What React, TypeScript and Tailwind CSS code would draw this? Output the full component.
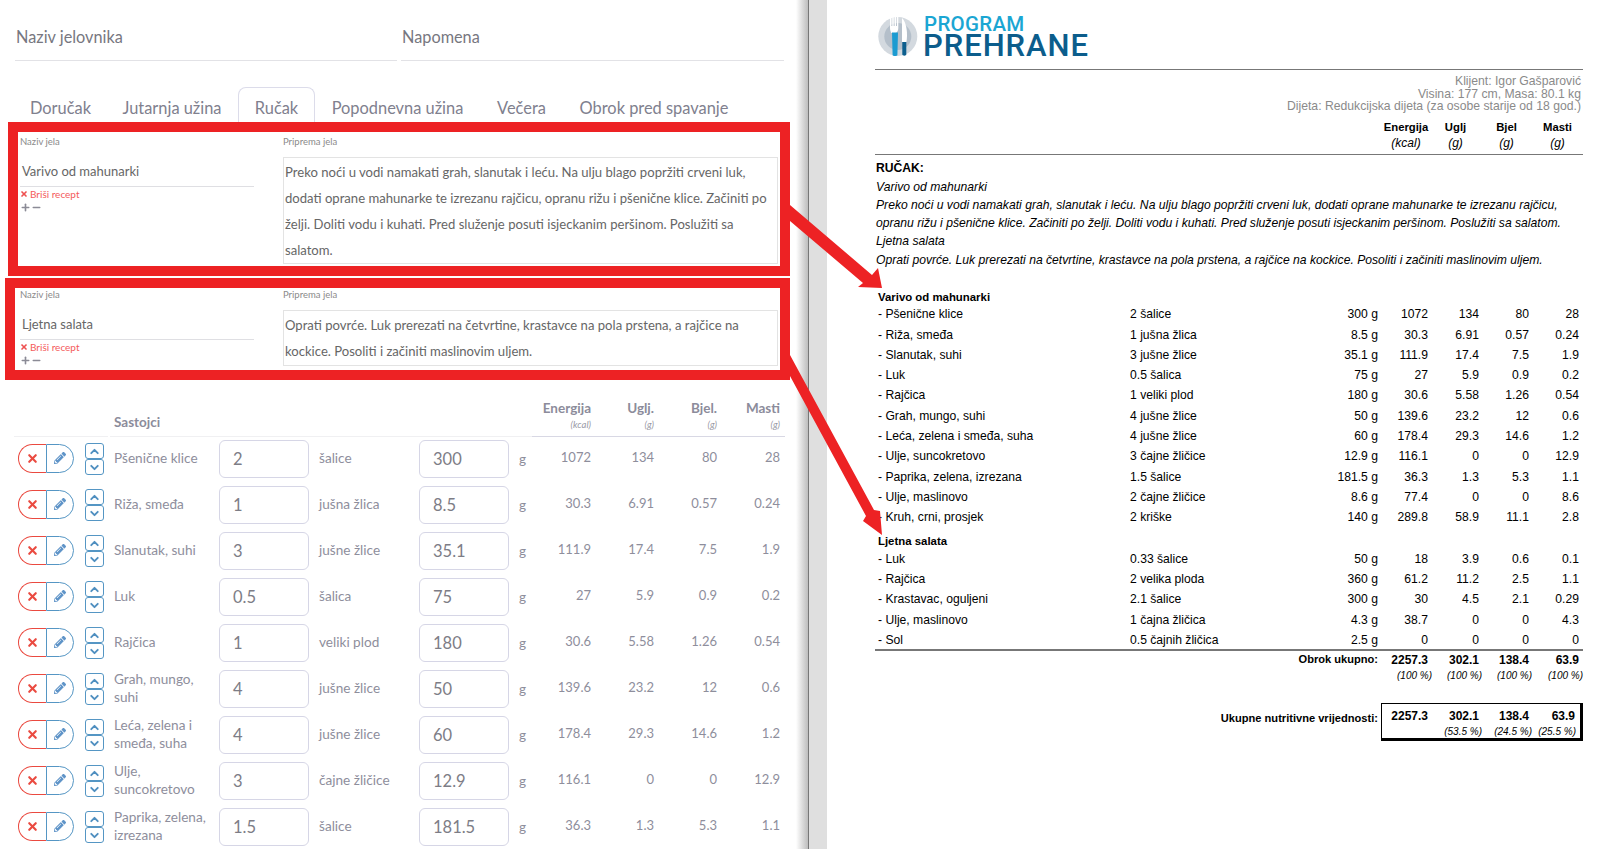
import React from "react";
import { X, Plus, Minus, ChevronUp, ChevronDown } from "lucide-react";
import { FaPencilAlt } from "react-icons/fa";

const tabs = [
  { t: "Doručak", w: "w-[91px]" },
  { t: "Jutarnja užina", w: "w-[132px]" },
  { t: "Ručak", w: "w-[77px]", active: true },
  { t: "Popodnevna užina", w: "w-[165px]" },
  { t: "Večera", w: "w-[83px]" },
  { t: "Obrok pred spavanje", w: "w-[182px]" },
];

const rows = [
  ["Pšenične klice", "2", "šalice", "300", "1072", "134", "80", "28"],
  ["Riža, smeđa", "1", "jušna žlica", "8.5", "30.3", "6.91", "0.57", "0.24"],
  ["Slanutak, suhi", "3", "jušne žlice", "35.1", "111.9", "17.4", "7.5", "1.9"],
  ["Luk", "0.5", "šalica", "75", "27", "5.9", "0.9", "0.2"],
  ["Rajčica", "1", "veliki plod", "180", "30.6", "5.58", "1.26", "0.54"],
  ["Grah, mungo,\nsuhi", "4", "jušne žlice", "50", "139.6", "23.2", "12", "0.6"],
  ["Leća, zelena i\nsmeđa, suha", "4", "jušne žlice", "60", "178.4", "29.3", "14.6", "1.2"],
  ["Ulje,\nsuncokretovo", "3", "čajne žličice", "12.9", "116.1", "0", "0", "12.9"],
  ["Paprika, zelena,\nizrezana", "1.5", "šalice", "181.5", "36.3", "1.3", "5.3", "1.1"],
];

const r1 = [
  ["h-[20px] pb-px", "Pšenične klice", "2 šalice", "300 g", "1072", "134", "80", "28"],
  ["h-[21px] pt-px", "Riža, smeđa", "1 jušna žlica", "8.5 g", "30.3", "6.91", "0.57", "0.24"],
  ["h-[20px]", "Slanutak, suhi", "3 jušne žlice", "35.1 g", "111.9", "17.4", "7.5", "1.9"],
  ["h-[20px]", "Luk", "0.5 šalica", "75 g", "27", "5.9", "0.9", "0.2"],
  ["h-[20px]", "Rajčica", "1 veliki plod", "180 g", "30.6", "5.58", "1.26", "0.54"],
  ["h-[21px] pt-px", "Grah, mungo, suhi", "4 jušne žlice", "50 g", "139.6", "23.2", "12", "0.6"],
  ["h-[20px]", "Leća, zelena i smeđa, suha", "4 jušne žlice", "60 g", "178.4", "29.3", "14.6", "1.2"],
  ["h-[20px]", "Ulje, suncokretovo", "3 čajne žličice", "12.9 g", "116.1", "0", "0", "12.9"],
  ["h-[21px] pt-px", "Paprika, zelena, izrezana", "1.5 šalice", "181.5 g", "36.3", "1.3", "5.3", "1.1"],
  ["h-[20px]", "Ulje, maslinovo", "2 čajne žličice", "8.6 g", "77.4", "0", "0", "8.6"],
  ["h-[20px]", "Kruh, crni, prosjek", "2 kriške", "140 g", "289.8", "58.9", "11.1", "2.8"],
];

const r2 = [
  ["h-[20px]", "Luk", "0.33 šalice", "50 g", "18", "3.9", "0.6", "0.1"],
  ["h-[20px]", "Rajčica", "2 velika ploda", "360 g", "61.2", "11.2", "2.5", "1.1"],
  ["h-[20px]", "Krastavac, oguljeni", "2.1 šalice", "300 g", "30", "4.5", "2.1", "0.29"],
  ["h-[21px] pt-px", "Ulje, maslinovo", "1 čajna žličica", "4.3 g", "38.7", "0", "0", "4.3"],
  ["h-[18px] pt-[2px]", "Sol", "0.5 čajnih žličica", "2.5 g", "0", "0", "0", "0"],
];

function Recipe({ name, lines, areaH, boxCls, leftPad, shift }: { name: string; lines: string[]; areaH: string; boxCls: string; leftPad: string; shift: string }) {
  return (
    <div className={`border-[10px] border-[#ed2224] bg-white ${boxCls}`}>
      <div className={`flex ${leftPad} ${shift}`}>
        <div className="w-[234px] shrink-0">
          <div className="h-[20px] text-[9.5px] leading-[20px] text-[#8a8a8a]">Naziv jela</div>
          <div className="h-[35px] border-b border-[#dfdfe3] pt-[9px] pl-[2px] text-[13px] leading-[20px] text-[#666]">{name}</div>
          <div className="flex h-[14px] items-center text-[10px] leading-[14px] text-[#f45b5b]">
            <X size={8} strokeWidth={5} className="mr-[2px] text-[#ee5050]" />
            Briši recept
          </div>
          <div className="flex h-[13px] items-center text-[#8b8b96]">
            <Plus size={11} strokeWidth={3.5} />
            <Minus size={11} strokeWidth={3.5} />
          </div>
        </div>
        <div className="ml-[29px] w-[495px] shrink-0">
          <div className="h-[20px] text-[9.5px] leading-[20px] text-[#8a8a8a]">Priprema jela</div>
          <div className={`mt-[5px] border border-[#e3e3e3] pl-px pt-px text-[13.1px] leading-[26px] text-[#666] ${areaH}`}>
            {lines.map((l) => (
              <div key={l} className="whitespace-nowrap">{l}</div>
            ))}
          </div>
        </div>
      </div>
    </div>
  );
}

function Head({ a, b, w }: { a: string; b: string; w: string }) {
  return (
    <div className={`text-right ${w}`}>
      <div className="text-[13.5px] font-bold leading-[18px] text-[#8c8c9b]">{a}</div>
      <div className="mt-[2px] text-[9.5px] italic leading-[12px] text-[#9a9aa6]">{b}</div>
    </div>
  );
}

function IngredientRow({ r }: { r: string[] }) {
  return (
    <div className="flex h-[46px] items-center pl-[18px] text-[13.6px] text-[#8e8e9c]">
      <div className="mb-[2px] flex h-[29px] w-[56px] shrink-0">
        <div className="flex w-[28px] items-center justify-center rounded-l-full border border-r-0 border-[#ea4a40]">
          <X size={13} strokeWidth={4} className="text-[#ea4a40]" />
        </div>
        <div className="flex w-[28px] items-center justify-center rounded-r-full border border-[#5596c4]">
          <FaPencilAlt size={12} className="text-[#5f94c8]" />
        </div>
      </div>
      <div className="ml-[11px] flex w-[19px] shrink-0 flex-col">
        <div className="flex h-[16px] items-center justify-center rounded-[3px] border border-[#5596c4]">
          <ChevronUp size={13} strokeWidth={3.5} className="text-[#4f8fc0]" />
        </div>
        <div className="flex h-[16px] items-center justify-center rounded-[3px] border border-[#5596c4]">
          <ChevronDown size={13} strokeWidth={3.5} className="text-[#4f8fc0]" />
        </div>
      </div>
      <div className="mb-[2px] ml-[10px] w-[105px] shrink-0 whitespace-pre-line leading-[18px]">{r[0]}</div>
      <div className="flex h-[38px] w-[90px] shrink-0 items-center rounded-[6px] border border-[#d6d6e6] pl-[13px] text-[16.5px] text-[#7d7d86]">{r[1]}</div>
      <div className="mb-[2px] ml-[10px] w-[100px] shrink-0 whitespace-nowrap">{r[2]}</div>
      <div className="flex h-[38px] w-[90px] shrink-0 items-center rounded-[6px] border border-[#d6d6e6] pl-[13px] text-[16.5px] text-[#7d7d86]">{r[3]}</div>
      <div className="w-[32px] shrink-0 pl-[10px]">g</div>
      <div className="mb-[2px] w-[50px] shrink-0 text-right text-[13px]">{r[4]}</div>
      <div className="mb-[2px] w-[63px] shrink-0 text-right text-[13px]">{r[5]}</div>
      <div className="mb-[2px] w-[63px] shrink-0 text-right text-[13px]">{r[6]}</div>
      <div className="mb-[2px] w-[63px] shrink-0 text-right text-[13px]">{r[7]}</div>
    </div>
  );
}

function PlanRow({ r }: { r: string[] }) {
  return (
    <div className={`flex items-center text-[12.15px] text-black ${r[0]}`}>
      <div className="w-[255px] shrink-0 pl-[3px]">- {r[1]}</div>
      <div className="w-[170px] shrink-0">{r[2]}</div>
      <div className="w-[78px] shrink-0 text-right">{r[3]}</div>
      <div className="w-[50px] shrink-0 text-right">{r[4]}</div>
      <div className="w-[51px] shrink-0 text-right">{r[5]}</div>
      <div className="w-[50px] shrink-0 text-right">{r[6]}</div>
      <div className="w-[50px] shrink-0 text-right">{r[7]}</div>
    </div>
  );
}

function Logo() {
  return (
    <svg width="40" height="41" viewBox="0 0 40 41" className="shrink-0">
      <circle cx="19.8" cy="20.5" r="19.5" fill="#d3d9df" />
      <circle cx="19.8" cy="20.5" r="13.5" fill="#b4bfca" />
      <path d="M12 1h1.4v9h.9V1h1.4v9h.9V1h1.4v9h.9V1h1.4v11c0 2.5-1 4-2.5 5h-4.5C13 16 12 14.5 12 12z" fill="#fff" />
      <path d="M14 16.500h6l-.6 22.500c0 1.400-4.800 1.400-4.800 0z" fill="#1c9bd1" />
      <path d="M24 2c3 3 5 9 5 17 0 3-.3 5-.6 7H24z" fill="#fff" />
      <path d="M24.300 26h4v12.500c0 1.500-4 1.500-4 0z" fill="#0d5f8e" />
    </svg>
  );
}

export default function App() {
  return (
    <div className="relative flex h-[849px] w-[1620px] overflow-hidden bg-white">
      {/* left editor */}
      <div className="w-[796px] shrink-0 font-['Lato',sans-serif]">
        <div className="flex h-[61px]">
          <div className="ml-[15px] w-[382px] border-b border-[#e2e2e6] pl-px pt-[27px] text-[16.3px] leading-[20px] text-[#77777f]">Naziv jelovnika</div>
          <div className="ml-[4px] w-[383px] border-b border-[#e2e2e6] pl-px pt-[27px] text-[16.3px] leading-[20px] text-[#77777f]">Napomena</div>
        </div>
        <div className="ml-[15px] mt-[26px] flex h-[35px]">
          {tabs.map((t) => (
            <div
              key={t.t}
              className={`h-[35px] shrink-0 whitespace-nowrap rounded-t-lg border-x border-t pt-[8px] text-center text-[16.4px] leading-[24px] text-[#80808e] ${t.w} ${t.active ? "border-[#dcdcea]" : "border-transparent"}`}
            >
              {t.t}
            </div>
          ))}
        </div>
        <Recipe
          name="Varivo od mahunarki"
          areaH="h-[107px]"
          boxCls="ml-[8px] h-[154px] w-[782px]"
          leftPad="pl-[2px]"
          shift=""
          lines={[
            "Preko noći u vodi namakati grah, slanutak i leću. Na ulju blago popržiti crveni luk,",
            "dodati oprane mahunarke te izrezanu rajčicu, opranu rižu i pšenične klice. Začiniti po",
            "želji. Doliti vodu i kuhati. Pred služenje posuti isjeckanim peršinom. Poslužiti sa",
            "salatom.",
          ]}
        />
        <Recipe
          name="Ljetna salata"
          areaH="h-[56px]"
          boxCls="ml-[5px] mt-[2px] h-[102px] w-[785px]"
          leftPad="pl-[5px]"
          shift="-mt-[3px]"
          lines={[
            "Oprati povrće. Luk prerezati na četvrtine, krastavce na pola prstena, a rajčice na",
            "kockice. Posoliti i začiniti maslinovim uljem.",
          ]}
        />
        <div className="flex h-[57px]">
          <div className="ml-[14px] w-[94px] border-b border-[#f0f0f2]" />
          <div className="ml-[2px] flex w-[422px] items-end border-b border-[#f0f0f2] pb-[5px] pl-[4px] text-[13.5px] font-bold leading-[18px] text-[#8c8c9b]">Sastojci</div>
          <div className="flex w-[253px] items-end border-b border-[#d8d8e4] pb-[5px]">
            <Head a="Energija" b="(kcal)" w="w-[59px]" />
            <Head a="Uglj." b="(g)" w="w-[63px]" />
            <Head a="Bjel." b="(g)" w="w-[63px]" />
            <Head a="Masti" b="(g)" w="w-[63px]" />
          </div>
        </div>
        <div className="-mt-px">
          {rows.map((r) => (
            <IngredientRow key={r[0]} r={r} />
          ))}
        </div>
      </div>

      {/* divider */}
      <div className="w-[12px] shrink-0 bg-gradient-to-r from-white to-[#bdbdbd]" />
      <div className="w-[1px] shrink-0 bg-[#777]" />
      <div className="w-[18px] shrink-0 bg-[#dfdfdf]" />

      {/* right preview */}
      <div className="w-[793px] shrink-0 pl-[48px] font-['Liberation_Sans',Arial,sans-serif]">
        <div className="w-[708px]">
          <div className="flex h-[69px] pl-[3px] pt-[16px]">
            <Logo />
            <div className="ml-[5px] font-['Roboto',sans-serif]">
              <div className="pl-px text-[20.5px] font-medium leading-[17px] tracking-[0.3px] text-[#1ba6d3]">PROGRAM</div>
              <div className="mt-[1px] text-[31px] font-medium leading-[24px] tracking-[0.95px] text-[#0c5d8c]">PREHRANE</div>
            </div>
          </div>
          <div className="h-[1px] bg-[#777]" />
          <div className="mt-[5px] pr-[2px] text-right text-[12.2px] leading-[12.5px] text-[#8a8a8a]">
            <div>Klijent: Igor Gašparović</div>
            <div>Visina: 177 cm, Masa: 80.1 kg</div>
            <div>Dijeta: Redukcijska dijeta (za osobe starije od 18 god.)</div>
          </div>
          <div className="mt-[7px] flex h-[34px] justify-end text-center text-[12px]">
            {[["Energija", "(kcal)", "w-[48px]"], ["Uglj", "(g)", "w-[51px]"], ["Bjel", "(g)", "w-[51px]"], ["Masti", "(g)", "w-[51px]"]].map((c) => (
              <div key={c[0]} className={c[2]}>
                <div className="text-[11.3px] font-bold leading-[14px] text-black">{c[0]}</div>
                <div className="mt-px italic leading-[16px] text-black">{c[1]}</div>
              </div>
            ))}
          </div>
          <div className="h-[1px] bg-[#777]" />
          <div className="mt-[2px] pl-px text-[12.15px] text-black">
            <div className="h-[21px] font-bold leading-[22px]">RUČAK:</div>
            <div className="italic leading-[18px]">
              <div>Varivo od mahunarki</div>
              <div className="whitespace-nowrap">Preko noći u vodi namakati grah, slanutak i leću. Na ulju blago popržiti crveni luk, dodati oprane mahunarke te izrezanu rajčicu,</div>
              <div className="whitespace-nowrap">opranu rižu i pšenične klice. Začiniti po želji. Doliti vodu i kuhati. Pred služenje posuti isjeckanim peršinom. Poslužiti sa salatom.</div>
              <div>Ljetna salata</div>
              <div className="whitespace-nowrap pt-px">Oprati povrće. Luk prerezati na četvrtine, krastavce na pola prstena, a rajčice na kockice. Posoliti i začiniti maslinovim uljem.</div>
            </div>
          </div>
          <div className="mt-[19px] h-[17px] pl-[3px] text-[11.4px] font-bold leading-[18px] text-black">Varivo od mahunarki</div>
          {r1.map((r) => (
            <PlanRow key={r[1]} r={r} />
          ))}
          <div className="mt-[4px] h-[18px] pl-[3px] text-[11.4px] font-bold leading-[18px] text-black">Ljetna salata</div>
          {r2.map((r) => (
            <PlanRow key={r[1]} r={r} />
          ))}
          <div className="h-[2px] bg-[#777]" />
          <div className="flex h-[18px] items-center text-[12px] font-bold text-black">
            <div className="w-[503px] shrink-0 text-right text-[11.1px]">Obrok ukupno:</div>
            <div className="w-[50px] shrink-0 text-right">2257.3</div>
            <div className="w-[51px] shrink-0 text-right">302.1</div>
            <div className="w-[50px] shrink-0 text-right">138.4</div>
            <div className="w-[50px] shrink-0 text-right">63.9</div>
          </div>
          <div className="flex h-[14px] items-center text-[10px] italic text-black">
            <div className="w-[557px] shrink-0 text-right">(100 %)</div>
            <div className="w-[50px] shrink-0 text-right">(100 %)</div>
            <div className="w-[50px] shrink-0 text-right">(100 %)</div>
            <div className="w-[51px] shrink-0 text-right">(100 %)</div>
          </div>
          <div className="mt-[20px] flex">
            <div className="w-[506px] shrink-0 pr-[3px] pt-[7px] text-right text-[11.1px] font-bold leading-[16px] text-black">Ukupne nutritivne vrijednosti:</div>
            <div className="h-[38px] w-[202px] shrink-0 border-b-[3px] border-l border-r-[3px] border-t border-black text-black">
              <div className="flex h-[21px] items-end text-[12px] font-bold">
                <div className="w-[46px] shrink-0 text-right">2257.3</div>
                <div className="w-[51px] shrink-0 text-right">302.1</div>
                <div className="w-[50px] shrink-0 text-right">138.4</div>
                <div className="w-[46px] shrink-0 text-right">63.9</div>
              </div>
              <div className="flex h-[13px] items-center text-[10px] italic">
                <div className="w-[100px] shrink-0 text-right">(53.5 %)</div>
                <div className="w-[50px] shrink-0 text-right">(24.5 %)</div>
                <div className="w-[44px] shrink-0 text-right">(25.5 %)</div>
              </div>
            </div>
          </div>
        </div>
      </div>

      {/* annotation arrows */}
      <svg width="1620" height="849" className="pointer-events-none absolute left-0 top-0">
        <polygon points="790,205 872,275 878,268 882,288 858,287 863,283 790,221" fill="#ed2224" />
        <polygon points="790,355 874,510 880,511 882,535 863,521 866,516 790,376" fill="#ed2224" />
      </svg>
    </div>
  );
}
